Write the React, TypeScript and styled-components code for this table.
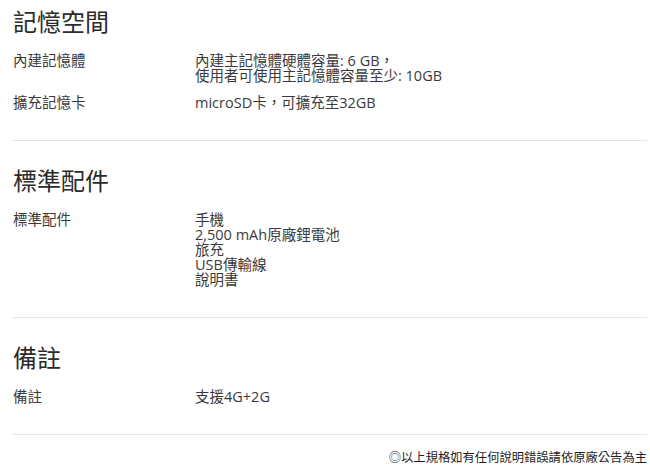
import React from "react";
import styled, { createGlobalStyle } from "styled-components";

const GlobalStyle = createGlobalStyle`
  html, body {
    margin: 0;
    padding: 0;
    background: #fff;
  }
  body {
    font-family: "Open Sans", "Noto Sans CJK TC", sans-serif;
    color: #333;
  }
`;

type Spec = { label: string; lines: string[] };
type Section = { title: string; specs: Spec[] };

const sections: Section[] = [
  {
    title: "記憶空間",
    specs: [
      {
        label: "內建記憶體",
        lines: ["內建主記憶體硬體容量: 6 GB，", "使用者可使用主記憶體容量至少: 10GB"],
      },
      { label: "擴充記憶卡", lines: ["microSD卡，可擴充至32GB"] },
    ],
  },
  {
    title: "標準配件",
    specs: [
      {
        label: "標準配件",
        lines: ["手機", "2,500 mAh原廠鋰電池", "旅充", "USB傳輸線", "說明書"],
      },
    ],
  },
  {
    title: "備註",
    specs: [{ label: "備註", lines: ["支援4G+2G"] }],
  },
];

export default function App() {
  return (
    <>
      <GlobalStyle />
      <Page>
        {sections.map((s, i) => (
          <Block key={s.title} $first={i === 0}>
            <Title>{s.title}</Title>
            <SpecList>
              {s.specs.map((spec) => (
                <SpecRow key={spec.label}>
                  <Label>{spec.label}</Label>
                  <Value>
                    {spec.lines.map((l) => (
                      <div key={l}>{l}</div>
                    ))}
                  </Value>
                </SpecRow>
              ))}
            </SpecList>
          </Block>
        ))}
        <Note>◎以上規格如有任何說明錯誤請依原廠公告為主</Note>
      </Page>
    </>
  );
}

const Page = styled.div`
  width: 650px;
  padding: 0 3px 0 13px;
  box-sizing: border-box;
`;

const Block = styled.section<{ $first?: boolean }>`
  padding: ${(p) => (p.$first ? "7px" : "25px")} 0 30px;
  border-bottom: 1px solid #e5e5e5;
`;

const Title = styled.h2`
  margin: 0 0 16px;
  font-size: 24px;
  font-weight: 400;
  line-height: 30px;
  color: #2b2b2b;
`;

const SpecList = styled.div`
  display: flex;
  flex-direction: column;
  gap: 12px;
`;

const SpecRow = styled.div`
  display: grid;
  grid-template-columns: 182px 1fr;
  font-size: 14.5px;
  line-height: 15px;
`;

const Label = styled.div`
  color: #3a3a3a;
`;

const Value = styled.div`
  color: #3a3a3a;
`;

const Note = styled.div`
  padding-top: 15px;
  text-align: right;
  font-size: 12.3px;
  line-height: 15px;
  color: #1e1e1e;
`;
